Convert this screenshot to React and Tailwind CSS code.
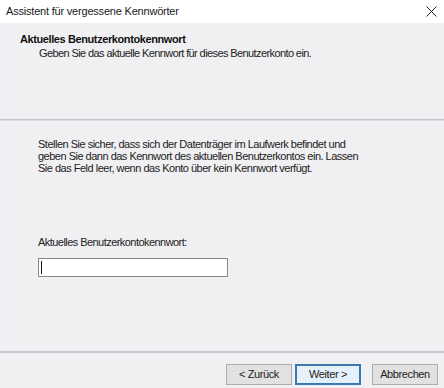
export default function App() {
  return (
    <div className="w-[444px] h-[388px] bg-[#f0f0f2] flex flex-col overflow-hidden" style={{ fontFamily: '"Liberation Sans", Arial, sans-serif' }}>
      <div className="h-[23px] bg-white flex items-center justify-between pl-[6px] pr-[6px] shrink-0">
        <span className="text-[11px] text-[#1a1a1a] tracking-[-0.2px]">Assistent für vergessene Kennwörter</span>
        <svg width="11" height="11" viewBox="0 0 11 11" className="mr-[1px]">
          <path d="M0.5 0.5 L10.5 10.5 M10.5 0.5 L0.5 10.5" stroke="#222" strokeWidth="1" />
        </svg>
      </div>

      <div className="h-[96px] shrink-0 pt-[10px] pl-[20px] bg-gradient-to-r from-[#edf0f5] via-[#f0f0f2] to-[#f0f0f2] from-[0%] via-[3%]">
        <div className="text-[11px] font-bold text-[#111] leading-[13px] tracking-[-0.4px]">Aktuelles Benutzerkontokennwort</div>
        <div className="text-[11px] text-[#222] leading-[13px] pl-[19px] mt-[1px] tracking-[-0.6px]">Geben Sie das aktuelle Kennwort für dieses Benutzerkonto ein.</div>
      </div>
      <div className="h-[2px] bg-[#c4c3c8] border-b border-[#dcdce0] shrink-0"></div>

      <div className="flex-1 pl-[38px] pt-[17px] bg-gradient-to-r from-[#edf0f5] via-[#f0f0f2] to-[#f0f0f2] from-[0%] via-[3%]">
        <p className="text-[11px] text-[#222] leading-[12px] tracking-[-0.5px]">
          Stellen Sie sicher, dass sich der Datenträger im Laufwerk befindet und<br />
          geben Sie dann das Kennwort des aktuellen Benutzerkontos ein. Lassen<br />
          Sie das Feld leer, wenn das Konto über kein Kennwort verfügt.
        </p>
        <div className="mt-[62px] text-[11px] text-[#222] leading-[12px] tracking-[-0.55px]">Aktuelles Benutzerkontokennwort:</div>
        <div className="mt-[10px] w-[190px] h-[19px] bg-white border border-[#8a8a8a] flex items-center pl-[2px]">
          <div className="w-[1px] h-[13px] bg-[#111]"></div>
        </div>
      </div>

      <div className="h-[2px] bg-[#c8c7cc] shrink-0"></div>
      <div className="h-[35px] shrink-0 flex items-start justify-end pt-[11px] pr-[6px]">
        <button className="w-[66px] h-[21px] bg-[#e1e1e1] border border-[#adadad] text-[11px] text-[#222] tracking-[-0.4px]">&lt; Zurück</button>
        <button className="ml-[3px] w-[66px] h-[21px] bg-[#e5f1fb] border-2 border-[#3a78ad] text-[11px] text-[#222] tracking-[-0.4px]">Weiter &gt;</button>
        <button className="ml-[11px] w-[66px] h-[21px] bg-[#e1e1e1] border border-[#adadad] text-[11px] text-[#222] tracking-[-0.4px]">Abbrechen</button>
      </div>
    </div>
  )
}
